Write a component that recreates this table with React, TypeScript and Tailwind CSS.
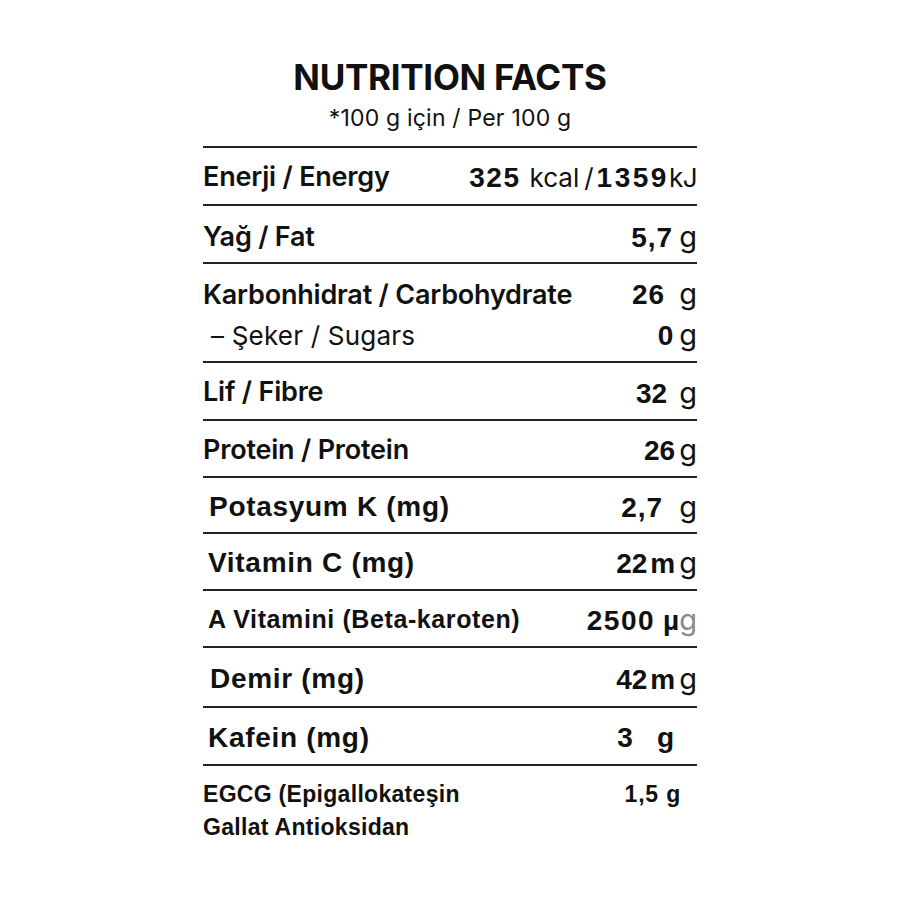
import React from "react";

function Unit({ children, gray, className = "" }: { children: React.ReactNode; gray?: boolean; className?: string }) {
  return (
    <span
      className={`font-['Inter',sans-serif] font-normal text-[29px] leading-none ${gray ? "text-[#8a8a8a]" : "text-[#111]"} ${className}`}
    >
      {children}
    </span>
  );
}

function Num({ children, className = "" }: { children: React.ReactNode; className?: string }) {
  return (
    <span className={`font-['Liberation_Sans',Arial,sans-serif] font-bold text-[28px] leading-none ${className}`}>
      {children}
    </span>
  );
}

const labelTop = "font-['Inter',sans-serif] font-semibold text-[27px] tracking-[-0.2px]";
const labelBot = "font-['Liberation_Sans',Arial,sans-serif] font-bold text-[28px] tracking-[0.7px]";
const row = "flex items-center justify-between border-b-2 border-[#222] pt-[3px]";

export default function App() {
  return (
    <div className="w-[900px] h-[900px] bg-white text-[#111] flex flex-col items-center">
      <div className="w-[494px] flex flex-col pt-[60px]">
        <div className="flex flex-col items-center">
          <div className="font-['Inter',sans-serif] font-bold text-[35px] leading-[35px] tracking-[-0.3px]">
            NUTRITION FACTS
          </div>
          <div className="font-['Inter',sans-serif] text-[23px] leading-[23px] mt-[12px] tracking-[0.2px]">
            *100 g için / Per 100 g
          </div>
        </div>

        <div className="mt-[16px] border-t-2 border-[#222]" />

        {/* Energy */}
        <div className={`h-[58px] ${row}`}>
          <span className={labelTop}>Enerji / Energy</span>
          <span className="flex items-baseline">
            <Num className="tracking-[1.5px]">325</Num>
            <span className="font-['Inter',sans-serif] text-[26px] ml-[9px]">kcal</span>
            <span className="font-['Inter',sans-serif] text-[26px] ml-[5px]">/</span>
            <Num className="ml-[3px] tracking-[2.5px]">1359</Num>
            <span className="font-['Inter',sans-serif] text-[26px] tracking-[-0.5px]">kJ</span>
          </span>
        </div>

        {/* Fat */}
        <div className={`h-[58px] ${row} pt-[6px]`}>
          <span className={labelTop}>Yağ / Fat</span>
          <span className="flex items-baseline">
            <Num className="tracking-[1px]">5,7</Num>
            <Unit className="ml-[6px]">g</Unit>
          </span>
        </div>

        {/* Carbs */}
        <div className="h-[99px] flex flex-col justify-center border-b-2 border-[#222] gap-[10px] pt-[4px]">
          <div className="flex items-baseline justify-between">
            <span className={`${labelTop} leading-[30px]`}>Karbonhidrat / Carbohydrate</span>
            <span className="flex items-baseline">
              <Num className="tracking-[1px]">26</Num>
              <Unit className="ml-[14px]">g</Unit>
            </span>
          </div>
          <div className="flex items-baseline justify-between">
            <span className="font-['Inter',sans-serif] text-[26px] leading-[30px] pl-[8px] tracking-[0.2px]">– Şeker / Sugars</span>
            <span className="flex items-baseline">
              <Num>0</Num>
              <Unit className="ml-[6px]">g</Unit>
            </span>
          </div>
        </div>

        {/* Fibre */}
        <div className={`h-[58px] ${row}`}>
          <span className={labelTop}>Lif / Fibre</span>
          <span className="flex items-baseline">
            <Num>32</Num>
            <Unit className="ml-[12px]">g</Unit>
          </span>
        </div>

        {/* Protein */}
        <div className={`h-[57px] ${row}`}>
          <span className={labelTop}>Protein / Protein</span>
          <span className="flex items-baseline">
            <Num>26</Num>
            <Unit className="ml-[4px]">g</Unit>
          </span>
        </div>

        {/* Potasyum */}
        <div className={`h-[56px] ${row} pl-[6px]`}>
          <span className={labelBot}>Potasyum K (mg)</span>
          <span className="flex items-baseline">
            <Num className="tracking-[1px]">2,7</Num>
            <Unit className="ml-[16px]">g</Unit>
          </span>
        </div>

        {/* Vitamin C */}
        <div className={`h-[57px] ${row} pl-[5px]`}>
          <span className={labelBot}>Vitamin C (mg)</span>
          <span className="flex items-baseline">
            <Num>22</Num>
            <Num className="ml-[3px]">m</Num>
            <Unit className="ml-[4px]">g</Unit>
          </span>
        </div>

        {/* A Vitamini */}
        <div className={`h-[57px] ${row} pl-[5px]`}>
          <span className="font-['Liberation_Sans',Arial,sans-serif] font-bold text-[25px] tracking-[0.6px]">A Vitamini (Beta-karoten)</span>
          <span className="flex items-baseline">
            <Num className="tracking-[1.5px]">2500</Num>
            <Num className="ml-[8px]">µ</Num>
            <Unit gray>g</Unit>
          </span>
        </div>

        {/* Demir */}
        <div className={`h-[60px] ${row} pl-[7px]`}>
          <span className={labelBot}>Demir (mg)</span>
          <span className="flex items-baseline">
            <Num>42</Num>
            <Num className="ml-[3px]">m</Num>
            <Unit className="ml-[4px]">g</Unit>
          </span>
        </div>

        {/* Kafein */}
        <div className={`h-[58px] ${row} pl-[5px] pr-[23px]`}>
          <span className={labelBot}>Kafein (mg)</span>
          <span className="flex items-baseline">
            <Num>3</Num>
            <Num className="ml-[24px]">g</Num>
          </span>
        </div>

        {/* EGCG */}
        <div className="flex flex-col pt-[12px] font-['Liberation_Sans',Arial,sans-serif] font-bold text-[23px] leading-[33px] tracking-[0.3px]">
          <div className="flex justify-between pr-[16px]">
            <span>EGCG (Epigallokateşin</span>
            <span className="tracking-[0.8px]">1,5 g</span>
          </div>
          <div>Gallat Antioksidan</div>
        </div>
      </div>
    </div>
  );
}
